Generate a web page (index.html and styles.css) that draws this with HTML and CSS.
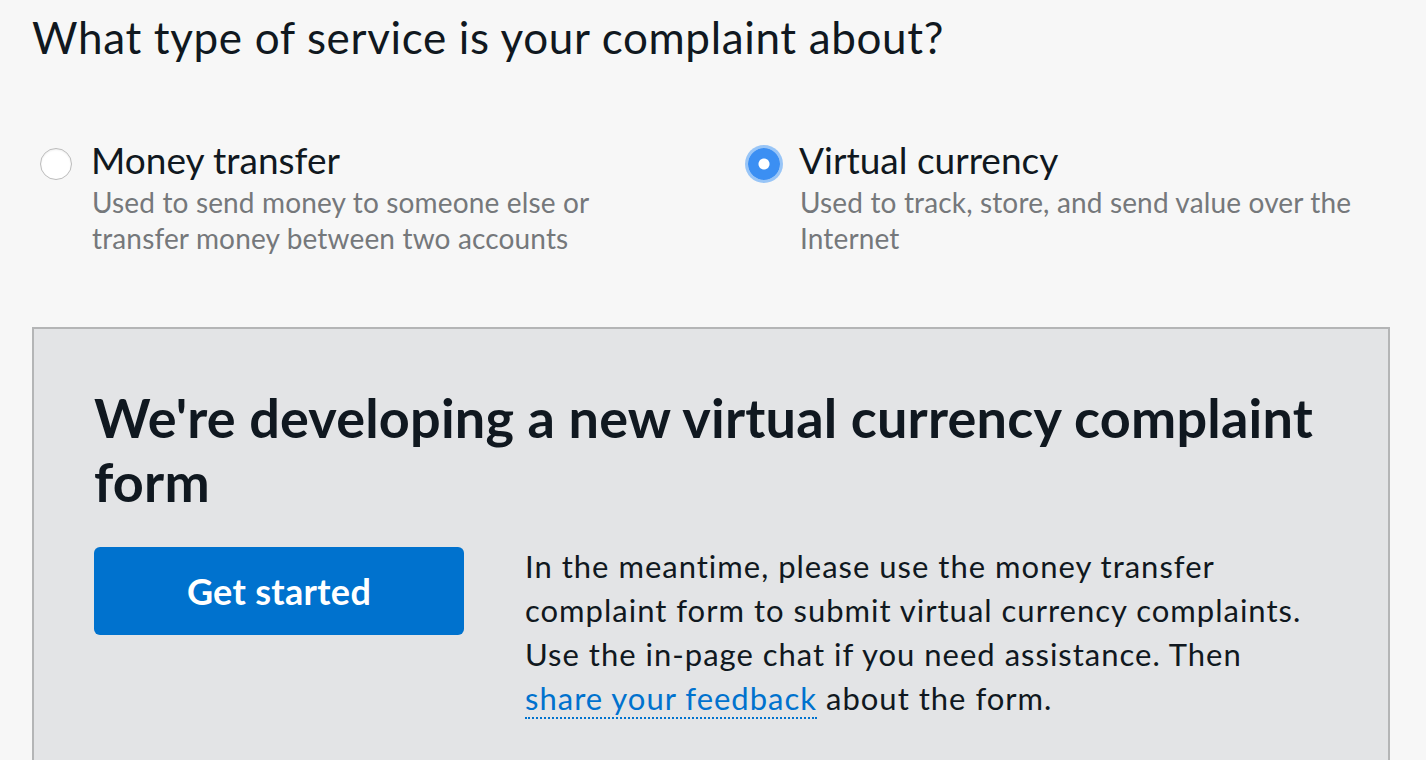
FILE: index.html
```html
<!DOCTYPE html>
<html lang="en">
<head>
  <meta charset="UTF-8">
  <title>Submit a complaint</title>
  <meta name="viewport" content="width=device-width, initial-scale=1.0"/>
  <link rel="stylesheet" href="styles.css">
</head>
<body>

<div class="page">
  <h1 class="question">What type of service is your complaint about?</h1>

  <div class="choices">
    <label class="choice">
      <input type="radio" name="service" value="money">
      <span class="choice-text">
        <span class="choice-label">Money transfer</span>
        <span class="choice-help">Used to send money to someone else or transfer money between two accounts</span>
      </span>
    </label>
    <label class="choice">
      <input type="radio" name="service" value="virtual" checked>
      <span class="choice-text">
        <span class="choice-label">Virtual currency</span>
        <span class="choice-help">Used to track, store, and send value over the Internet</span>
      </span>
    </label>
  </div>

  <div class="notice">
    <h2>We're developing a new virtual currency complaint form</h2>
    <div class="notice-body">
      <a class="btn" href="#start">Get started</a>
      <p>In the meantime, please use the money transfer complaint form to submit virtual currency complaints. Use the in-page chat if you need assistance. Then <a href="#feedback">share your feedback</a> about the form.</p>
    </div>
  </div>
</div>

</body>
</html>
```

FILE: styles.css
```css
body {
  font-family: Lato, 'Noto Sans', sans-serif;
  margin: 0;
  padding: 0;
  background-color: #f7f7f7;
  color: #101820;
}
.page {
  padding: 10px 36px 0 32px;
}
.question {
  font-size: 44px;
  font-weight: 400;
  line-height: 55px;
  letter-spacing: 0.65px;
  margin: 0;
}
.choices {
  display: grid;
  grid-template-columns: 650px 650px;
  gap: 58px;
  margin-top: 73px;
}
.choice {
  display: flex;
  gap: 20px;
  padding-left: 8px;
  cursor: pointer;
}
.choice input {
  appearance: none;
  -webkit-appearance: none;
  flex: none;
  width: 32px;
  height: 32px;
  margin: 10px 0 0;
  border-radius: 50%;
  border: 1.5px solid #bcbcbc;
  background: #fff;
  box-shadow: inset 0 1px 2px rgba(0, 0, 0, 0.08);
  box-sizing: border-box;
}
.choice input:checked {
  border: none;
  background: radial-gradient(circle, #fff 0 5px, #3b8ff3 6px);
  box-shadow: 0 0 0 3px #98c5f7;
}
.choice-text {
  display: flex;
  flex-direction: column;
}
.choice-label {
  font-size: 37px;
  line-height: 44px;
  margin-left: -1px;
}
.choice-help {
  font-size: 28px;
  line-height: 36px;
  letter-spacing: 0.15px;
  color: #75787b;
  margin-top: 2px;
}
.notice {
  margin-top: 71px;
  background-color: #e3e4e6;
  border: 2px solid #b4b5b6;
  padding: 57px 60px 80px;
}
.notice h2 {
  font-size: 54px;
  font-weight: 700;
  line-height: 64px;
  letter-spacing: 0.2px;
  margin: 0;
}
.notice-body {
  display: flex;
  align-items: flex-start;
  gap: 61px;
  margin-top: 30px;
}
.btn {
  flex: none;
  width: 370px;
  height: 88px;
  margin-top: 3px;
  display: flex;
  align-items: center;
  justify-content: center;
  background-color: #0072ce;
  color: white;
  border-radius: 6px;
  text-decoration: none;
  font-size: 36px;
  font-weight: 700;
  letter-spacing: 0.3px;
}
.notice p {
  margin: 0;
  font-size: 31px;
  line-height: 44px;
  letter-spacing: 1px;
  max-width: 790px;
}
.notice p a {
  color: #0072ce;
  text-decoration: none;
  border-bottom: 2px dotted #0072ce;
}
```
